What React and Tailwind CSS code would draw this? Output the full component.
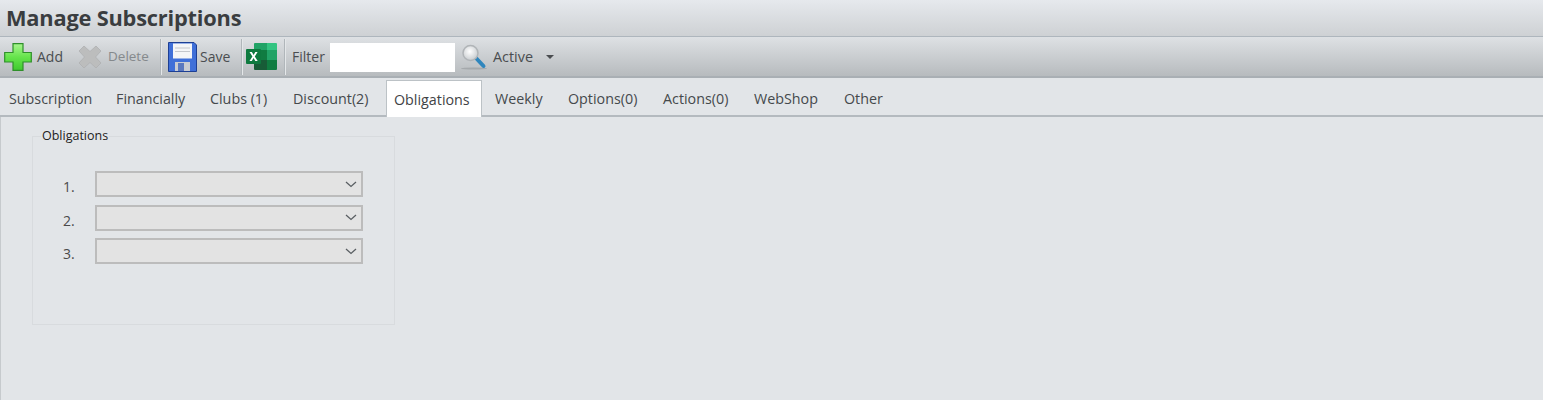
import React from 'react';

const FONT = "font-['Open_Sans','Noto_Sans',sans-serif]";

const tabs = [
  { label: 'Subscription', w: 'w-[107px]' },
  { label: 'Financially', w: 'w-[94px]' },
  { label: 'Clubs (1)', w: 'w-[83px]' },
  { label: 'Discount(2)', w: 'w-[101px]' },
  { label: 'Obligations', w: 'w-[96px]', active: true },
  { label: 'Weekly', w: 'w-[73px]' },
  { label: 'Options(0)', w: 'w-[95px]' },
  { label: 'Actions(0)', w: 'w-[91px]' },
  { label: 'WebShop', w: 'w-[90px]' },
  { label: 'Other', w: 'w-[60px]' },
];

function PlusIcon() {
  return (
    <svg width="28" height="28" viewBox="0 0 28 28">
      <defs>
        <linearGradient id="plusFill" x1="0" y1="0" x2="0" y2="1">
          <stop offset="0" stopColor="#a8f58e" />
          <stop offset="0.5" stopColor="#66e44c" />
          <stop offset="1" stopColor="#3fca2e" />
        </linearGradient>
      </defs>
      <path d="M9 .7h10v8.800h8.300v9.500H19v8.300H9V19H.7V9.500H9z" fill="url(#plusFill)" stroke="#2f8f2a" strokeWidth="1.200" />
    </svg>
  );
}

function DeleteIcon() {
  return (
    <svg width="24" height="24" viewBox="0 0 24 24">
      <path d="M6 1 12 6.500 18 1l5 5-5.500 6 5.500 6-5 5-6-5.500L6 23l-5-5 5.500-6L1 6z" fill="#bcbdbd" stroke="#aeb0b1" strokeWidth="0.800" strokeLinejoin="round" />
    </svg>
  );
}

function SaveIcon() {
  return (
    <svg width="29" height="30" viewBox="0 0 29 30">
      <path d="M.5.5h25.500l2.500 2.500v26.500H.5z" fill="#3f6fd8" stroke="#1d3f94" />
      <rect x="5" y="1.500" width="19" height="15" fill="#f4f5f7" />
      <path d="M7 6h15M7 9.500h15" stroke="#c4c7cc" />
      <rect x="7" y="20" width="15" height="9" fill="#c9ccd2" />
      <rect x="10" y="21" width="6" height="8" fill="#5a78bf" />
    </svg>
  );
}

function ExcelIcon() {
  return (
    <svg width="31" height="27" viewBox="0 0 31 27">
      <path d="M9 0h12v7H8V1a1 1 0 0 1 1-1z" fill="#21a366" />
      <path d="M21 0h9a1 1 0 0 1 1 1v6H21z" fill="#33c481" />
      <rect x="8" y="7" width="13" height="10" fill="#107c41" />
      <rect x="21" y="7" width="10" height="10" fill="#21a366" />
      <path d="M8 17h13v10H9a1 1 0 0 1-1-1z" fill="#185c37" />
      <path d="M21 17h10v9a1 1 0 0 1-1 1h-9z" fill="#107c41" />
      <rect x="0" y="6" width="15" height="15" rx="1" fill="#0e7a3f" />
      <path d="M3.500 9h2.400l1.700 3 1.700-3h2.300l-2.800 4.500 2.900 4.500H9.300l-1.700-3-1.800 3H3.500l2.900-4.500z" fill="#fff" />
    </svg>
  );
}

function SearchIcon() {
  return (
    <svg width="26" height="28" viewBox="0 0 26 28">
      <defs>
        <radialGradient id="lens" cx="0.45" cy="0.4" r="0.6">
          <stop offset="0" stopColor="#ffffff" />
          <stop offset="1" stopColor="#c8cccf" />
        </radialGradient>
      </defs>
      <ellipse cx="13" cy="25.500" rx="13" ry="1" fill="#a5a9ac" />
      <path d="m14.500 14.500 8 8.500" stroke="#2f86bd" strokeWidth="4" strokeLinecap="round" />
      <circle cx="9.500" cy="10" r="7.500" fill="url(#lens)" stroke="#b0b4b7" strokeWidth="1.500" />
    </svg>
  );
}

function Sep() {
  return <div className="h-[36px] w-[2px] border-l border-[#b0b6ba] bg-[#e4e7e9]" />;
}

function Combo({ n }) {
  return (
    <div className="flex h-[26.5px] items-center">
      <span className="w-[63px] pl-[31px] pt-[5px] text-[14px] text-[#4a4a4a]">{n}.</span>
      <div className="flex h-[26px] w-[268px] items-center justify-end border-2 border-[#bcbcbc] bg-[#e3e3e3] pr-[4px]">
        <svg width="12" height="7" viewBox="0 0 12 7" fill="none">
          <path d="m1 1 5 4.500L11 1" stroke="#5a5f63" strokeWidth="1.300" />
        </svg>
      </div>
    </div>
  );
}

export default function App() {
  return (
    <div className={`${FONT} flex h-[400px] w-full flex-col overflow-hidden bg-[#e2e5e8] text-[#3f4346]`}>
      {/* Title */}
      <div className="flex h-[37px] shrink-0 items-center border-b border-[#aeb6bd] bg-gradient-to-b from-[#e6e9ed] to-[#ced1d4] pl-[6px]">
        <h1 className="text-[21.800px] font-bold leading-none tracking-[-0.2px] text-[#3a3d40]">Manage Subscriptions</h1>
      </div>

      {/* Toolbar */}
      <div className="flex h-[41px] shrink-0 items-center border-b-2 border-[#a9afb4] bg-gradient-to-b from-[#dee1e4] to-[#b7bbbe] text-[14px]">
        <div className="ml-[4px] w-[33px]"><PlusIcon /></div>
        <span className="w-[41px] text-[#4a4d50]">Add</span>
        <div className="w-[30px]"><DeleteIcon /></div>
        <span className="w-[52px] text-[13.500px] text-[#85898c]">Delete</span>
        <Sep />
        <div className="ml-[6px] w-[32px]"><SaveIcon /></div>
        <span className="w-[41px] text-[#4a4d50]">Save</span>
        <Sep />
        <div className="ml-[3px] w-[38px]"><ExcelIcon /></div>
        <Sep />
        <span className="ml-[6px] w-[38px] text-[#4a4d50]">Filter</span>
        <div className="mt-[2px] h-[29px] w-[125px] bg-white" />
        <div className="ml-[6px] w-[32px]"><SearchIcon /></div>
        <span className="w-[53px] text-[14.400px] text-[#4a4d50]">Active</span>
        <svg width="8" height="4" viewBox="0 0 8 4"><path d="M0 0h8L4 4z" fill="#4a4d50" /></svg>
      </div>

      {/* Tabs */}
      <div className="flex h-[39px] shrink-0 items-end border-b-2 border-[#b4babf] pl-[9px] text-[14.300px]">
        {tabs.map((t) => (
          <div
            key={t.label}
            className={
              t.active
                ? `-mb-[2px] flex h-[37px] ${t.w} items-center -ml-[8px] mr-[13px] border border-b-0 border-[#bcc2c6] bg-white pl-[7px] pt-[2px]`
                : `flex h-[37px] ${t.w} items-center pt-[4px] text-[#45494c]`
            }
          >
            {t.label}
          </div>
        ))}
      </div>

      {/* Content */}
      <div className="min-h-0 flex-1 border-l border-[#c6cacd] pl-[31px]">
        <fieldset className="mt-[10px] h-[198px] w-[363px] border border-[#d8dbde] pl-[8px]">
          <legend className="px-px text-[12.500px] leading-[18px] text-[#222]">Obligations</legend>
          <div className="mt-[26px] ml-[-9px] flex flex-col gap-[7px]">
            <Combo n={1} />
            <Combo n={2} />
            <Combo n={3} />
          </div>
        </fieldset>
      </div>
    </div>
  );
}
